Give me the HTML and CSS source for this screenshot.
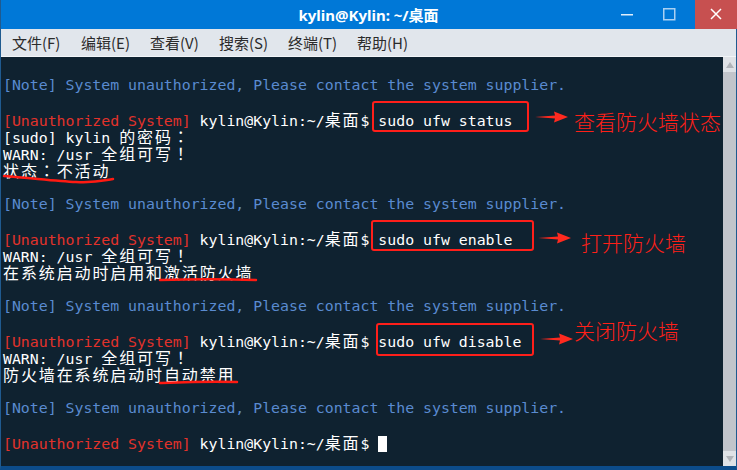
FILE: index.html
```html
<!DOCTYPE html>
<html lang="zh-CN">
<head>
    <meta charset="UTF-8">
    <title>kylin@Kylin: ~/桌面</title>
    <link rel="stylesheet" href="styles.css">
</head>
<body>
    <div class="window">
        <div class="titlebar">
            <span class="title">kylin@Kylin: ~/桌面</span>
            <div class="win-buttons">
                <span class="wb wb-min"><svg width="12" height="2"><rect width="12" height="1.5" fill="#dfeefb"/></svg></span>
                <span class="wb wb-max"><svg width="13" height="13"><rect x="0.75" y="0.75" width="11" height="11" fill="none" stroke="#a9d0f2" stroke-width="1.5"/></svg></span>
                <span class="wb wb-close"><svg width="12" height="12"><path d="M1 1 L11 11 M11 1 L1 11" stroke="#fff" stroke-width="1.5"/></svg></span>
            </div>
        </div>

        <div class="menubar">
            <span class="menu-item">文件(F)</span>
            <span class="menu-item">编辑(E)</span>
            <span class="menu-item">查看(V)</span>
            <span class="menu-item">搜索(S)</span>
            <span class="menu-item">终端(T)</span>
            <span class="menu-item">帮助(H)</span>
        </div>

        <div class="terminal">
            <div class="screen">
                <div class="ln"> </div>
                <div class="ln note">[Note] System unauthorized, Please contact the system supplier.</div>
                <div class="ln"> </div>
                <div class="ln"><span class="red">[Unauthorized System]</span> kylin@Kylin:~/<span class="w">桌面</span>$ sudo ufw status</div>
                <div class="ln">[sudo] kylin <span class="w">的密码<span class="p" lang="zh-TW">：</span></span></div>
                <div class="ln">WARN: /usr <span class="w">全组可写<span class="p" lang="zh-TW">！</span></span></div>
                <div class="ln"><span class="w">状态<span class="p" lang="zh-TW">：</span>不活动</span></div>
                <div class="ln"> </div>
                <div class="ln note">[Note] System unauthorized, Please contact the system supplier.</div>
                <div class="ln"> </div>
                <div class="ln"><span class="red">[Unauthorized System]</span> kylin@Kylin:~/<span class="w">桌面</span>$ sudo ufw enable</div>
                <div class="ln">WARN: /usr <span class="w">全组可写<span class="p" lang="zh-TW">！</span></span></div>
                <div class="ln"><span class="w">在系统启动时启用和激活防火墙</span></div>
                <div class="ln"> </div>
                <div class="ln note">[Note] System unauthorized, Please contact the system supplier.</div>
                <div class="ln"> </div>
                <div class="ln"><span class="red">[Unauthorized System]</span> kylin@Kylin:~/<span class="w">桌面</span>$ sudo ufw disable</div>
                <div class="ln">WARN: /usr <span class="w">全组可写<span class="p" lang="zh-TW">！</span></span></div>
                <div class="ln"><span class="w">防火墙在系统启动时自动禁用</span></div>
                <div class="ln"> </div>
                <div class="ln note">[Note] System unauthorized, Please contact the system supplier.</div>
                <div class="ln"> </div>
                <div class="ln"><span class="red">[Unauthorized System]</span> kylin@Kylin:~/<span class="w">桌面</span>$ <span class="cursor"></span></div>

                <!-- annotations drawn over the screenshot -->
                <div class="box box-1"></div>
                <div class="box box-2"></div>
                <div class="box box-3"></div>

                <svg class="arrow arrow-1" width="34" height="12"><polygon points="0,6 20,4.5 19,0.5 33,6 19,11.5 20,7.5" fill="#ff2a1f"/></svg>
                <svg class="arrow arrow-2" width="34" height="12"><polygon points="0,6 20,4.5 19,0.5 33,6 19,11.5 20,7.5" fill="#ff2a1f"/></svg>
                <svg class="arrow arrow-3" width="34" height="12"><polygon points="0,6 20,4.5 19,0.5 33,6 19,11.5 20,7.5" fill="#ff2a1f"/></svg>

                <span class="label label-1">查看防火墙状态</span>
                <span class="label label-2">打开防火墙</span>
                <span class="label label-3">关闭防火墙</span>

                <svg class="scribble" width="723" height="408">
                    <path d="M3 119 C 30 121, 55 124, 75 125 S 100 124, 112 122" fill="none" stroke="#ff1a12" stroke-width="2.5" stroke-linecap="round"/>
                    <path d="M159 223 C 190 222, 225 222, 255 223" fill="none" stroke="#ff1a12" stroke-width="2.5" stroke-linecap="round"/>
                    <path d="M159 326 C 185 325, 210 324, 236 325" fill="none" stroke="#ff1a12" stroke-width="2.5" stroke-linecap="round"/>
                </svg>
            </div>

            <div class="scrollbar">
                <div class="sb-btn"><span class="tri-up"></span></div>
                <div class="sb-track"></div>
                <div class="sb-btn"><span class="tri-down"></span></div>
            </div>
        </div>
    </div>
</body>
</html>
```

FILE: styles.css
```css
* {
    margin: 0;
    padding: 0;
    box-sizing: border-box;
}

body {
    background: #0f2230;
    font-family: "Noto Sans", "Noto Sans CJK SC", sans-serif;
}

.window {
    width: 737px;
    height: 470px;
    display: flex;
    flex-direction: column;
    background: #0f2230;
    border-left: 1px solid #1f5a8f;
    border-right: 1px solid #1f5a8f;
    border-bottom: 4px solid #0c4c8a;
}

/* title bar */
.titlebar {
    height: 29px;
    background: #0078d7;
    display: flex;
    align-items: center;
    justify-content: center;
    position: relative;
    flex-shrink: 0;
}

.title {
    color: #ffffff;
    font-size: 15px;
    font-weight: 700;
    font-family: "Noto Sans", "Noto Sans CJK SC", sans-serif;
}

.win-buttons {
    position: absolute;
    right: -1px;
    top: 0;
    height: 29px;
    display: flex;
}

.wb {
    display: flex;
    align-items: center;
    justify-content: center;
    height: 29px;
}

.wb-min {
    width: 42px;
    padding-top: 1px;
}

.wb-max {
    width: 42px;
    margin-right: 5px;
    padding-bottom: 1px;
}

.wb-close {
    width: 42px;
    background: #c75050;
    padding-bottom: 1px;
}

/* menu bar */
.menubar {
    height: 28px;
    background: #e1e6ec;
    border-bottom: 1px solid #f2f5f8;
    display: flex;
    align-items: center;
    padding-left: 11px;
    flex-shrink: 0;
}

.menu-item {
    width: 69px;
    font-size: 15px;
    color: #2b2b2b;
    font-family: "Noto Sans CJK SC", "Noto Sans", sans-serif;
    white-space: nowrap;
}

/* terminal */
.terminal {
    flex: 1;
    display: flex;
    min-height: 0;
}

.screen {
    flex: 1;
    position: relative;
    padding: 3px 0 0 2px;
    font-family: "DejaVu Sans Mono", "Noto Sans CJK SC", monospace;
    font-size: 14.85px;
    color: #ffffff;
    overflow: hidden;
}

.ln {
    height: 17px;
    line-height: 17px;
    white-space: pre;
}

.note {
    color: #5a8bd0;
}

.red {
    color: #e2322b;
}

.w {
    font-family: "Noto Sans CJK SC", sans-serif;
    font-size: 16px;
    letter-spacing: 1.88px;
}

/* centred full-width punctuation, as the terminal font draws it */
.p {
    font-family: "Noto Sans CJK TC", sans-serif;
}

.cursor {
    display: inline-block;
    width: 9px;
    height: 16px;
    background: #ffffff;
    vertical-align: -3px;
}

/* annotations */
.box {
    position: absolute;
    border: 2.5px solid #ff1f1a;
    border-radius: 3px;
}

.box-1 { left: 371px; top: 44px; width: 157px; height: 31px; }
.box-2 { left: 370px; top: 163px; width: 163px; height: 31px; }
.box-3 { left: 375px; top: 266px; width: 158px; height: 33px; }

.arrow {
    position: absolute;
}

.arrow-1 { left: 534px; top: 54px; }
.arrow-2 { left: 537px; top: 175px; }
.arrow-3 { left: 539px; top: 276px; }

.label {
    position: absolute;
    color: #ff2018;
    font-family: "Noto Sans CJK SC", sans-serif;
    font-weight: 300;
    font-size: 21px;
    line-height: 24px;
    white-space: nowrap;
}

.label-1 { left: 573px; top: 52px; }
.label-2 { left: 580px; top: 173px; }
.label-3 { left: 573px; top: 261px; }

.scribble {
    position: absolute;
    left: 0;
    top: 0;
}

/* scrollbar */
.scrollbar {
    width: 13px;
    display: flex;
    flex-direction: column;
    background: #c2c5cb;
}

.sb-btn {
    height: 15px;
    background: #dfe2e6;
    display: flex;
    align-items: center;
    justify-content: center;
}

.sb-track {
    flex: 1;
    background: #c2c5cb;
}

.tri-up {
    width: 0;
    height: 0;
    border-left: 4px solid transparent;
    border-right: 4px solid transparent;
    border-bottom: 6px solid #b0b3b8;
}

.tri-down {
    width: 0;
    height: 0;
    border-left: 4px solid transparent;
    border-right: 4px solid transparent;
    border-top: 6px solid #b0b3b8;
}
```
